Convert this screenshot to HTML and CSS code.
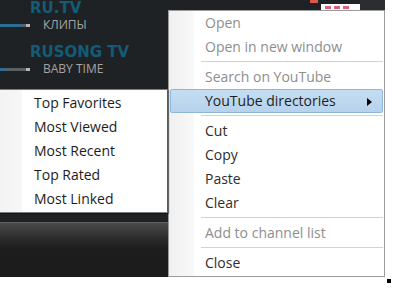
FILE: index.html
```html
<!DOCTYPE html>
<html lang="en">

<head>
	<meta charset="UTF-8">
	<title>RU.TV</title>
	<link rel="stylesheet" href="styles.css">
</head>

<body>
	<div class="player">
		<div class="channels">
			<div class="channel">
				<div class="name">RU.TV</div>
				<div class="show">
					<span class="bar"><span class="fill" style="width: 22px"></span></span>
					<span class="title">КЛИПЫ</span>
				</div>
			</div>
			<div class="channel">
				<div class="name">RUSONG TV</div>
				<div class="show">
					<span class="bar"><span class="fill" style="width: 5px"></span></span>
					<span class="title">BABY TIME</span>
				</div>
			</div>
		</div>
		<div class="badge">
			<span class="badge-tab"></span>
			<span class="badge-box"><i></i><i></i><i></i></span>
		</div>
		<div class="footer"></div>
	</div>

	<!-- context menu -->
	<ul class="menu">
		<li class="item off">Open</li>
		<li class="item off">Open in new window</li>
		<li class="sep"></li>
		<li class="item off">Search on YouTube</li>
		<li class="item hot">YouTube directories
			<svg class="arrow" width="5" height="8" viewBox="0 0 5 8"><path d="M0 0L5 4L0 8Z" fill="#000"/></svg>
		</li>
		<li class="sep"></li>
		<li class="item">Cut</li>
		<li class="item">Copy</li>
		<li class="item">Paste</li>
		<li class="item">Clear</li>
		<li class="sep"></li>
		<li class="item off">Add to channel list</li>
		<li class="sep"></li>
		<li class="item">Close</li>
	</ul>

	<!-- submenu of "YouTube directories" -->
	<ul class="submenu">
		<li class="item">Top Favorites</li>
		<li class="item">Most Viewed</li>
		<li class="item">Most Recent</li>
		<li class="item">Top Rated</li>
		<li class="item">Most Linked</li>
	</ul>

	<div class="grip"></div>
</body>

</html>
```

FILE: styles.css
```css
* {
	margin: 0;
	padding: 0;
	box-sizing: border-box;
}

body {
	background: #fff;
	font-family: "Open Sans", "Noto Sans", sans-serif;
	overflow: hidden;
}

ul {
	list-style: none;
}

/* dark player window */
.player {
	position: relative;
	width: 385px;
	height: 277px;
	background: #1f2225;
	display: flex;
	flex-direction: column;
}

.channel {
	margin-bottom: 12px;
}

.name {
	padding-left: 30px;
	font-family: "DejaVu Sans", sans-serif;
	font-weight: bold;
	font-size: 15px;
	line-height: 16px;
	color: #135b76;
	margin-bottom: 2px;
}

.show {
	display: flex;
	align-items: center;
	gap: 13px;
	height: 14px;
}

.bar {
	display: flex;
	width: 30px;
	height: 3px;
	background: linear-gradient(to right, #596068 0, #596068 26px, #b8b8b8 26px);
}

.fill {
	height: 3px;
	background: #2a6f92;
}

.title {
	font-size: 12px;
	line-height: 14px;
	color: #a4a4a4;
}

.badge {
	position: absolute;
	top: 0;
	left: 310px;
	width: 75px;
	height: 10px;
	background: linear-gradient(to right, #1f2225 0, #1f2225 50px, #2b2d30 50px);
}

.badge-tab {
	position: absolute;
	left: 0;
	top: 0;
	width: 8px;
	height: 3px;
	background: #d5594f;
}

.badge-box {
	position: absolute;
	left: 11px;
	top: 4px;
	width: 39px;
	height: 8px;
	background: #fafafa;
	display: flex;
	gap: 3px;
	padding: 2px 0 0 4px;
}

.badge-box i {
	width: 6px;
	height: 3px;
	background: #d6647e;
}

.footer {
	margin-top: auto;
	height: 55px;
	border-top: 1px solid #636363;
	background: linear-gradient(to bottom, #4a4a4a 0, #2e2e2e 14px, #1d1d1d 26px, #1c1c1c 100%);
}

/* context menus */
.menu {
	position: absolute;
	left: 168px;
	top: 10px;
	width: 217px;
	height: 267px;
	padding: 0 1px 1px 1px;
	border: 1px solid #9c9c9c;
	background: linear-gradient(to right, #f0f0f2 0, #f8f8f9 24px, #fff 26px);
	font-size: 14px;
}

.item {
	position: relative;
	height: 24px;
	line-height: 24px;
	padding-left: 35px;
	color: #2e2e2e;
	white-space: nowrap;
}

.off {
	color: #8e8e8e;
}

.hot {
	padding-left: 34px;
	border: 1px solid #8fb7dc;
	border-radius: 2px;
	line-height: 22px;
	background: linear-gradient(to bottom, #c4ddf2, #b6d3ec);
	color: #1e1e1e;
}

.arrow {
	position: absolute;
	right: 10px;
	top: 8px;
}

.sep {
	height: 6px;
	margin-left: 31px;
	padding-top: 2px;
}

.sep::after {
	content: "";
	display: block;
	height: 1px;
	background: #d2d2d2;
}

.submenu {
	position: absolute;
	left: 0;
	top: 89px;
	width: 168px;
	height: 124px;
	padding: 1px 0;
	border: 1px solid #7c7c7c;
	border-left: none;
	border-right-color: #5a5a5a;
	box-shadow: 1px 1px 1px rgba(0, 0, 0, 0.35);
	background: linear-gradient(to right, #f3f3f3 0, #f7f7f7 22px, #fff 22px);
	font-size: 14px;
}

.submenu .item {
	padding-left: 34px;
	color: #1c1c1c;
}

.grip {
	position: absolute;
	left: 387px;
	top: 279px;
	width: 4px;
	height: 4px;
	background: #000;
}
```
